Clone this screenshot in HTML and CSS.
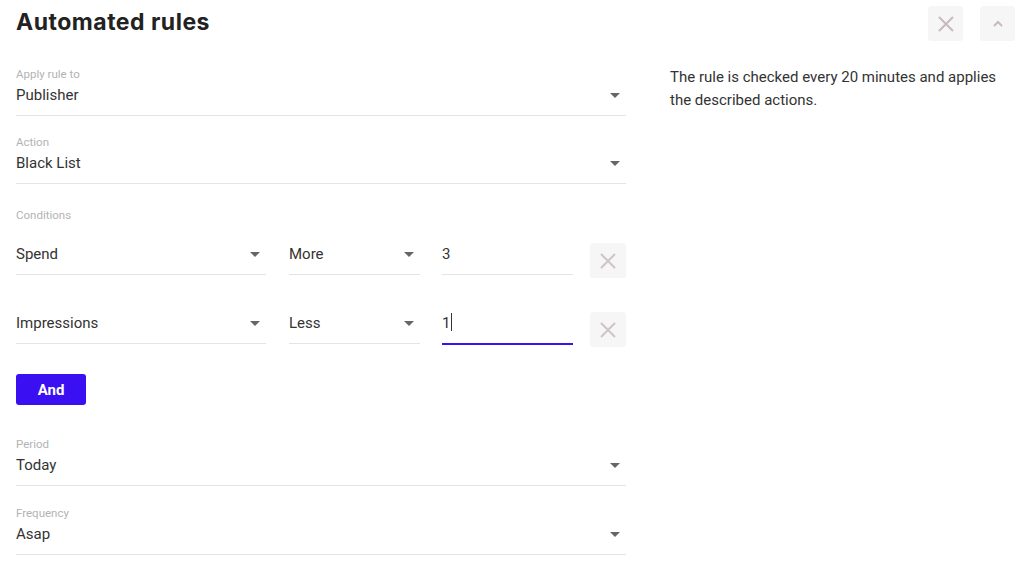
FILE: index.html
```html
<!DOCTYPE html>
<html lang="en">
<head>
  <meta charset="UTF-8">
  <meta name="viewport" content="width=device-width, initial-scale=1.0">
  <title>Automated rules</title>
  <link rel="stylesheet" href="styles.css">
</head>
<body>
  <div class="page">
    <div class="header">
      <h1>Automated rules</h1>
      <div class="header-actions">
        <button class="icon-btn" title="Close">
          <svg width="16" height="16" viewBox="0 0 16 16"><path d="M1 1L15 15M15 1L1 15" stroke="#c9b9bd" stroke-width="2" fill="none"/></svg>
        </button>
        <button class="icon-btn" title="Collapse">
          <svg width="12" height="8" viewBox="0 0 12 8"><path d="M2 6L6 2L10 6" stroke="#c9b9bd" stroke-width="2" fill="none"/></svg>
        </button>
      </div>
    </div>

    <div class="layout">
      <form class="rule-form">
        <div class="field">
          <div class="field-label">Apply rule to</div>
          <div class="select">Publisher <span class="caret"></span></div>
        </div>

        <div class="field">
          <div class="field-label">Action</div>
          <div class="select">Black List <span class="caret"></span></div>
        </div>

        <div class="field-label conditions-label">Conditions</div>

        <div class="condition">
          <div class="select cond-metric">Spend <span class="caret"></span></div>
          <div class="select cond-op">More <span class="caret"></span></div>
          <div class="select cond-value">3</div>
          <button type="button" class="remove-btn">
            <svg width="18" height="18" viewBox="0 0 18 18"><path d="M2 2L16 16M16 2L2 16" stroke="#cfc4c6" stroke-width="2" fill="none"/></svg>
          </button>
        </div>

        <div class="condition condition-last">
          <div class="select cond-metric">Impressions <span class="caret"></span></div>
          <div class="select cond-op">Less <span class="caret"></span></div>
          <div class="select cond-value focused">1<span class="cursor"></span></div>
          <button type="button" class="remove-btn">
            <svg width="18" height="18" viewBox="0 0 18 18"><path d="M2 2L16 16M16 2L2 16" stroke="#cfc4c6" stroke-width="2" fill="none"/></svg>
          </button>
        </div>

        <button type="button" class="and-btn">And</button>

        <div class="field period">
          <div class="field-label">Period</div>
          <div class="select">Today <span class="caret"></span></div>
        </div>

        <div class="field">
          <div class="field-label">Frequency</div>
          <div class="select">Asap <span class="caret"></span></div>
        </div>
      </form>

      <p class="note">The rule is checked every 20 minutes and applies the described actions.</p>
    </div>
  </div>
</body>
</html>
```

FILE: styles.css
```css
body {
  margin: 0;
  background: #ffffff;
  font-family: Roboto, "Liberation Sans", sans-serif;
  color: #333;
}

.page {
  padding: 0 9px 0 16px;
}

.header {
  display: flex;
  justify-content: space-between;
  align-items: flex-start;
  height: 46px;
}

h1 {
  margin: 0;
  font-family: Inter, "Liberation Sans", sans-serif;
  font-size: 23px;
  font-weight: 700;
  line-height: 44px;
  letter-spacing: 0.5px;
  color: #222;
}

.header-actions {
  display: flex;
  gap: 17px;
  margin-top: 6px;
}

.icon-btn {
  width: 35px;
  height: 35px;
  border: none;
  border-radius: 3px;
  background: #f7f6f6;
  display: flex;
  align-items: center;
  justify-content: center;
  padding: 0;
}

.layout {
  display: grid;
  grid-template-columns: 610px 1fr;
  column-gap: 44px;
}

.rule-form {
  padding-top: 21px;
}

.field {
  border-bottom: 1px solid #e4e4e4;
  padding-bottom: 8px;
  margin-bottom: 19px;
}

.field-label {
  font-size: 11.5px;
  line-height: 14px;
  color: #b3b3b3;
  margin-bottom: 2px;
}

.select {
  position: relative;
  font-size: 15px;
  line-height: 24px;
}

.caret {
  position: absolute;
  right: 6px;
  top: 10px;
  width: 0;
  height: 0;
  border-left: 5px solid transparent;
  border-right: 5px solid transparent;
  border-top: 5px solid #666;
}

.conditions-label {
  margin-top: 24px;
  margin-bottom: 20px;
}

.condition {
  display: flex;
  align-items: flex-start;
  margin-bottom: 33px;
}

.condition-last {
  margin-bottom: 27px;
}

.condition .select {
  border-bottom: 1px solid #e4e4e4;
  padding-bottom: 8px;
}

.cond-metric {
  width: 250px;
  margin-right: 23px;
}

.cond-op {
  width: 131px;
  margin-right: 22px;
}

.cond-value {
  width: 131px;
  margin-right: 17px;
}

.condition .cond-value.focused {
  border-bottom: 2px solid #3a12f0;
  padding-bottom: 8px;
}

.cursor {
  display: inline-block;
  width: 1px;
  height: 18px;
  background: #333;
  vertical-align: -3px;
  margin-left: 1px;
}

.remove-btn {
  width: 36px;
  height: 35px;
  margin-top: 1px;
  border: none;
  border-radius: 3px;
  background: #f7f6f6;
  display: flex;
  align-items: center;
  justify-content: center;
  padding: 0;
}

.and-btn {
  display: block;
  width: 70px;
  height: 31px;
  border: none;
  border-radius: 3px;
  background: #3a0ff2;
  color: #fff;
  font-family: Roboto, "Liberation Sans", sans-serif;
  font-size: 15px;
  font-weight: 700;
  padding: 0;
}

.period {
  margin-top: 32px;
  margin-bottom: 20px;
}

.note {
  margin: 20px 0 0;
  font-size: 15px;
  line-height: 23px;
  color: #333;
}
```
